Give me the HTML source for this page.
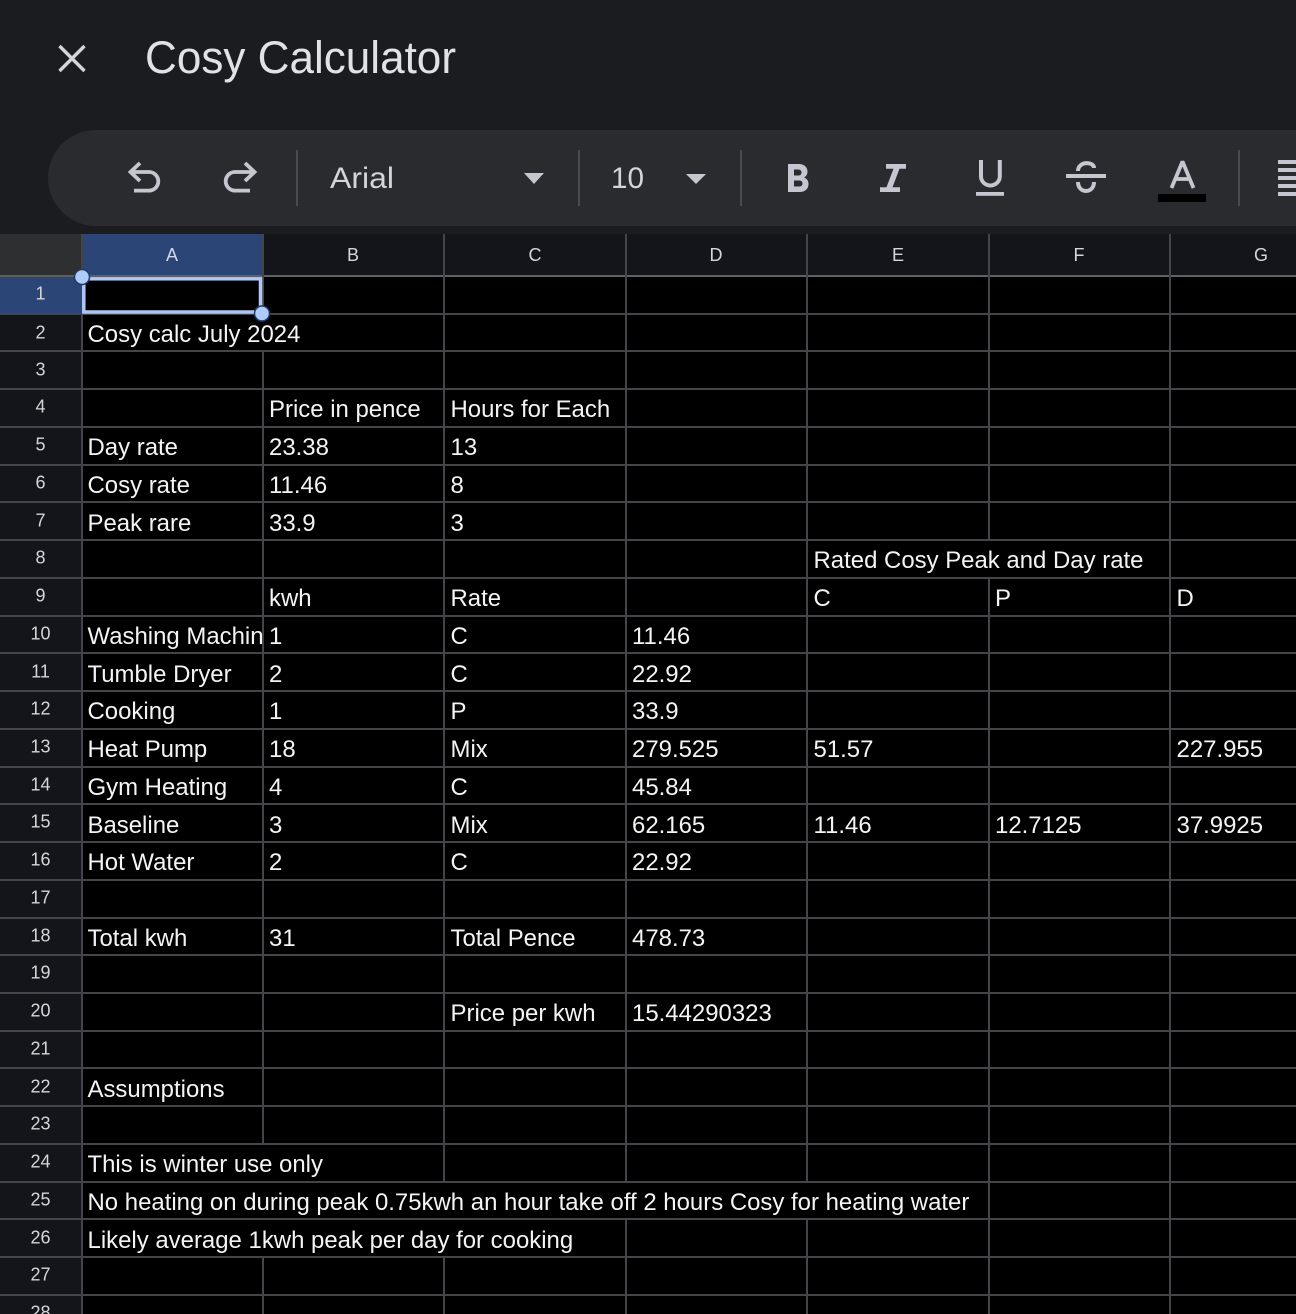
<!DOCTYPE html>
<html><head><meta charset="utf-8"><title>Cosy Calculator</title>
<style>
html,body{margin:0;padding:0;background:#000;width:1296px;height:1314px;overflow:hidden}
svg{display:block}
text{font-family:"Liberation Sans",sans-serif}
.c{font-size:23.94px;fill:#f4f4f4}
.r{font-size:18px;fill:#d5d6d8;text-anchor:middle}
.h{font-size:18px;fill:#d5d6d8;text-anchor:middle}
.i{fill:none;stroke:#c4c7d0;stroke-width:3.8}
.g{fill:#444548}
</style></head><body>
<svg width="1296" height="1314" viewBox="0 0 1296 1314" xmlns="http://www.w3.org/2000/svg">
<defs><clipPath id="a"><rect x="82" y="616" width="180" height="38"/></clipPath></defs>
<rect width="1296" height="234" fill="#1b1c20"/>
<path d="M59.500 46L84.500 71M84.500 46L59.500 71" stroke="#d4d5d8" stroke-width="3.4" fill="none"/>
<text x="145" y="73" font-size="45" fill="#e1e2e4" textLength="311" lengthAdjust="spacingAndGlyphs">Cosy Calculator</text>
<path d="M96 130H1296V226H96A48 48 0 0 1 96 130Z" fill="#2a2b2f"/>
<path class="i" d="M140 163L130.500 172L140 181M130.500 172H149A9.300 9.300 0 0 1 149 190.600H134"/>
<path class="i" d="M245 163L254.500 172L245 181M254.500 172H235A9.300 9.300 0 0 0 235 190.600H250"/>
<g fill="#4a4b4f"><rect x="296" y="150" width="2" height="56"/><rect x="578" y="150" width="2" height="56"/><rect x="740" y="150" width="2" height="56"/><rect x="1238" y="150" width="2" height="56"/></g>
<text x="330" y="188" font-size="30" fill="#d4d5d9" textLength="64" lengthAdjust="spacingAndGlyphs">Arial</text>
<path d="M524 173H544L534 184Z" fill="#c4c7d0"/>
<text x="611" y="188" font-size="30" fill="#d4d5d9" textLength="33" lengthAdjust="spacingAndGlyphs">10</text>
<path d="M686 174H706L696 184Z" fill="#c4c7d0"/>
<path fill="#c4c7d0" fill-rule="evenodd" d="M788 164H799C804.500 164 807.500 167.500 807.500 171.500C807.500 174.500 806 176.500 804 177.500C807 178.500 808.500 181 808.500 184C808.500 189 805 192 799.500 192H788ZM794 169.500V175.500H798.500C800.500 175.500 801.500 174 801.500 172.500C801.500 171 800.500 169.500 798.500 169.500ZM794 180.500V186.500H799.500C801.500 186.500 802.500 185 802.500 183.500C802.500 182 801.500 180.500 799.500 180.500Z"/>
<path fill="#c4c7d0" d="M886 164H906V168.700H899.500L892.500 187.300H900V192H880V187.300H886.500L893.500 168.700H886Z"/>
<path d="M981 160V176.500A9.400 9 0 0 0 999.800 176.500V160" fill="none" stroke="#c4c7d0" stroke-width="4"/>
<rect x="976" y="192" width="28" height="3.800" fill="#c4c7d0"/>
<path d="M1066 176H1106M1078 171C1078 161 1094 161 1094 168M1078 182C1078 194 1094 194 1094 182" fill="none" stroke="#c4c7d0" stroke-width="4"/>
<path d="M1171.500 188L1182.500 161.500L1193.500 188M1175 179H1190" fill="none" stroke="#c4c7d0" stroke-width="3.800" stroke-linejoin="bevel"/>
<rect x="1158" y="194" width="48" height="8" fill="#000"/>
<g fill="#c4c7d0"><rect x="1278" y="160" width="18" height="4"/><rect x="1278" y="168" width="18" height="4"/><rect x="1278" y="176" width="18" height="4"/><rect x="1278" y="184" width="18" height="4"/><rect x="1278" y="192" width="18" height="4"/></g>

<rect y="234" width="1296" height="42" fill="#14151a"/>
<rect y="234" width="82" height="42" fill="#2e2f31"/>
<rect x="82" y="234" width="181" height="42" fill="#2a4576"/>
<rect y="276" width="82" height="1038" fill="#14151a"/>
<rect y="277" width="82" height="37" fill="#2a4576"/>

<!-- horizontal lines -->
<g class="g">
<rect y="275" width="1296" height="2" fill="#5f6063"/>
<rect y="313" width="1296" height="2"/><rect y="350" width="1296" height="2"/><rect y="388" width="1296" height="2"/><rect y="426" width="1296" height="2"/><rect y="464" width="1296" height="2"/><rect y="501" width="1296" height="2"/><rect y="539" width="1296" height="2"/><rect y="577" width="1296" height="2"/><rect y="615" width="1296" height="2"/><rect y="652" width="1296" height="2"/><rect y="690" width="1296" height="2"/><rect y="728" width="1296" height="2"/><rect y="766" width="1296" height="2"/><rect y="803" width="1296" height="2"/><rect y="841" width="1296" height="2"/><rect y="879" width="1296" height="2"/><rect y="917" width="1296" height="2"/><rect y="954" width="1296" height="2"/><rect y="992" width="1296" height="2"/><rect y="1030" width="1296" height="2"/><rect y="1067" width="1296" height="2"/><rect y="1105" width="1296" height="2"/><rect y="1143" width="1296" height="2"/><rect y="1181" width="1296" height="2"/><rect y="1218" width="1296" height="2"/><rect y="1256" width="1296" height="2"/><rect y="1294" width="1296" height="2"/>
<!-- vertical lines -->
<rect x="81" y="234" width="2" height="1080"/>
<rect x="262" y="234" width="2" height="80"/><rect x="262" y="352" width="2" height="792"/><rect x="262" y="1258" width="2" height="56"/>
<rect x="443" y="234" width="2" height="948"/><rect x="443" y="1258" width="2" height="56"/>
<rect x="625" y="234" width="2" height="948"/><rect x="625" y="1220" width="2" height="94"/>
<rect x="806" y="234" width="2" height="948"/><rect x="806" y="1220" width="2" height="94"/>
<rect x="988" y="234" width="2" height="306"/><rect x="988" y="578" width="2" height="736"/>
<rect x="1169" y="234" width="2" height="1080"/>
</g>

<!-- column headers -->
<text class="h" x="172" y="261" style="fill:#cfd8ee">A</text><text class="h" x="353" y="261">B</text><text class="h" x="535" y="261">C</text><text class="h" x="716" y="261">D</text><text class="h" x="898" y="261">E</text><text class="h" x="1079" y="261">F</text><text class="h" x="1261" y="261">G</text>
<!-- row headers -->
<g transform="translate(0.5,-0.5)">
<text class="r" x="40" y="300">1</text><text class="r" x="40" y="339">2</text><text class="r" x="40" y="376">3</text><text class="r" x="40" y="413">4</text><text class="r" x="40" y="451">5</text><text class="r" x="40" y="489">6</text><text class="r" x="40" y="527">7</text><text class="r" x="40" y="564">8</text><text class="r" x="40" y="602">9</text><text class="r" x="40" y="640">10</text><text class="r" x="40" y="678">11</text><text class="r" x="40" y="715">12</text><text class="r" x="40" y="753">13</text><text class="r" x="40" y="791">14</text><text class="r" x="40" y="828">15</text><text class="r" x="40" y="866">16</text><text class="r" x="40" y="904">17</text><text class="r" x="40" y="942">18</text><text class="r" x="40" y="979">19</text><text class="r" x="40" y="1017">20</text><text class="r" x="40" y="1055">21</text><text class="r" x="40" y="1093">22</text><text class="r" x="40" y="1130">23</text><text class="r" x="40" y="1168">24</text><text class="r" x="40" y="1206">25</text><text class="r" x="40" y="1244">26</text><text class="r" x="40" y="1281">27</text><text class="r" x="40" y="1319">28</text>
</g>

<!-- cells -->
<text class="c" x="87.500" y="342">Cosy calc July 2024</text>
<text class="c" x="269" y="417">Price in pence</text><text class="c" x="450.500" y="417">Hours for Each</text>
<text class="c" x="87.500" y="455">Day rate</text><text class="c" x="269" y="455">23.38</text><text class="c" x="450.500" y="455">13</text>
<text class="c" x="87.500" y="493">Cosy rate</text><text class="c" x="269" y="493">11.46</text><text class="c" x="450.500" y="493">8</text>
<text class="c" x="87.500" y="531">Peak rare</text><text class="c" x="269" y="531">33.9</text><text class="c" x="450.500" y="531">3</text>
<text class="c" x="813.500" y="568">Rated Cosy Peak and Day rate</text>
<text class="c" x="269" y="606">kwh</text><text class="c" x="450.500" y="606">Rate</text><text class="c" x="813.500" y="606">C</text><text class="c" x="995" y="606">P</text><text class="c" x="1176.500" y="606">D</text>
<text class="c" x="87.500" y="644" clip-path="url(#a)">Washing Machine</text><text class="c" x="269" y="644">1</text><text class="c" x="450.500" y="644">C</text><text class="c" x="632" y="644">11.46</text>
<text class="c" x="87.500" y="682">Tumble Dryer</text><text class="c" x="269" y="682">2</text><text class="c" x="450.500" y="682">C</text><text class="c" x="632" y="682">22.92</text>
<text class="c" x="87.500" y="719">Cooking</text><text class="c" x="269" y="719">1</text><text class="c" x="450.500" y="719">P</text><text class="c" x="632" y="719">33.9</text>
<text class="c" x="87.500" y="757">Heat Pump</text><text class="c" x="269" y="757">18</text><text class="c" x="450.500" y="757">Mix</text><text class="c" x="632" y="757">279.525</text><text class="c" x="813.500" y="757">51.57</text><text class="c" x="1176.500" y="757">227.955</text>
<text class="c" x="87.500" y="795">Gym Heating</text><text class="c" x="269" y="795">4</text><text class="c" x="450.500" y="795">C</text><text class="c" x="632" y="795">45.84</text>
<text class="c" x="87.500" y="833">Baseline</text><text class="c" x="269" y="833">3</text><text class="c" x="450.500" y="833">Mix</text><text class="c" x="632" y="833">62.165</text><text class="c" x="813.500" y="833">11.46</text><text class="c" x="995" y="833">12.7125</text><text class="c" x="1176.500" y="833">37.9925</text>
<text class="c" x="87.500" y="870">Hot Water</text><text class="c" x="269" y="870">2</text><text class="c" x="450.500" y="870">C</text><text class="c" x="632" y="870">22.92</text>
<text class="c" x="87.500" y="946">Total kwh</text><text class="c" x="269" y="946">31</text><text class="c" x="450.500" y="946">Total Pence</text><text class="c" x="632" y="946">478.73</text>
<text class="c" x="450.500" y="1021">Price per kwh</text><text class="c" x="632" y="1021">15.44290323</text>
<text class="c" x="87.500" y="1097">Assumptions</text>
<text class="c" x="87.500" y="1172">This is winter use only</text>
<text class="c" x="87.500" y="1210">No heating on during peak 0.75kwh an hour take off 2 hours Cosy for heating water</text>
<text class="c" x="87.500" y="1248">Likely average 1kwh peak per day for cooking</text>

<!-- selection -->
<rect x="83.800" y="278.800" width="176.700" height="33.200" fill="none" stroke="#b0c6f5" stroke-width="3.500"/>
<circle cx="82" cy="277" r="7.500" fill="#aecbfa" stroke="#1f3a6b" stroke-width="1.500"/>
<circle cx="262" cy="313.500" r="7.500" fill="#aecbfa" stroke="#1f3a6b" stroke-width="1.500"/>
</svg>
</body></html>
